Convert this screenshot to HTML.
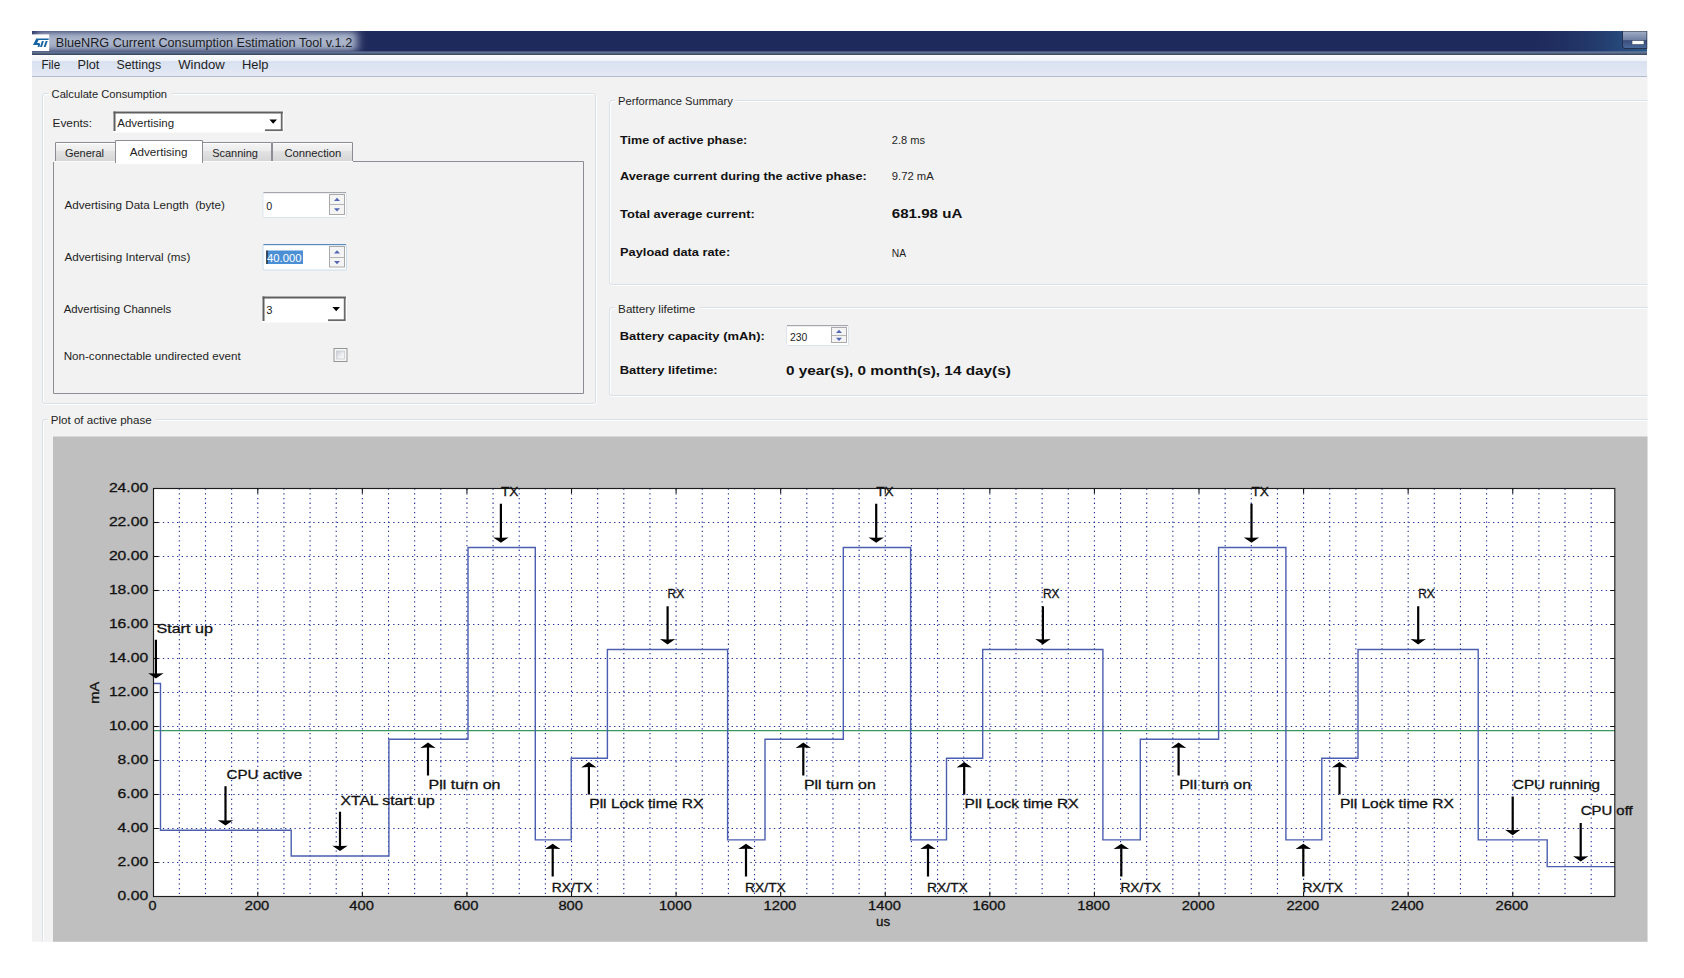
<!DOCTYPE html><html><head><meta charset="utf-8"><title>BlueNRG Current Consumption Estimation Tool</title>
<style>html,body{margin:0;padding:0;background:#fff;width:1684px;height:978px;overflow:hidden}svg{display:block;font-family:"Liberation Sans",sans-serif}</style></head><body>
<svg width="1684" height="978" viewBox="0 0 1684 978">
<defs><linearGradient id="tglow" x1="0" y1="0" x2="1" y2="0"><stop offset="0" stop-color="#8d9bb9"/><stop offset="0.85" stop-color="#95a2bf"/><stop offset="1" stop-color="#1f2a5c"/></linearGradient><linearGradient id="tglowv" x1="0" y1="0" x2="0" y2="1"><stop offset="0" stop-color="#1f2a5c" stop-opacity="0.55"/><stop offset="0.35" stop-color="#1f2a5c" stop-opacity="0"/><stop offset="0.7" stop-color="#1f2a5c" stop-opacity="0"/><stop offset="1" stop-color="#1f2a5c" stop-opacity="0.5"/></linearGradient><linearGradient id="menug" x1="0" y1="0" x2="0" y2="1"><stop offset="0" stop-color="#fbfcfe"/><stop offset="0.25" stop-color="#f0f3f9"/><stop offset="0.3" stop-color="#d9e1f0"/><stop offset="1" stop-color="#e4e9f4"/></linearGradient><linearGradient id="tabg" x1="0" y1="0" x2="0" y2="1"><stop offset="0" stop-color="#f6f6f6"/><stop offset="0.45" stop-color="#ececec"/><stop offset="0.5" stop-color="#e2e2e2"/><stop offset="1" stop-color="#d6d6d6"/></linearGradient><linearGradient id="btng" x1="0" y1="0" x2="0" y2="1"><stop offset="0" stop-color="#a3b0c8"/><stop offset="0.5" stop-color="#6f80a3"/><stop offset="0.55" stop-color="#3b4f7c"/><stop offset="1" stop-color="#4a6a9c"/></linearGradient><linearGradient id="tright" x1="0" y1="0" x2="1" y2="0"><stop offset="0" stop-color="#1f2a5c" stop-opacity="0"/><stop offset="1" stop-color="#2b5a8c"/></linearGradient><filter id="blur3" x="-20%" y="-60%" width="140%" height="220%"><feGaussianBlur stdDeviation="5 3"/></filter><linearGradient id="tstrip" x1="0" y1="0" x2="0" y2="1"><stop offset="0" stop-color="#7386a8"/><stop offset="1" stop-color="#36425a"/></linearGradient><linearGradient id="cbg" x1="0" y1="0" x2="1" y2="1"><stop offset="0" stop-color="#c3c8d4"/><stop offset="0.6" stop-color="#eef0f2"/><stop offset="1" stop-color="#f7f8f8"/></linearGradient><clipPath id="tbclip"><rect x="32" y="31" width="1615" height="20.5"/></clipPath><clipPath id="win"><rect x="32" y="31" width="1615.5" height="910.8"/></clipPath><clipPath id="axclip"><rect x="153" y="488" width="1462" height="409"/></clipPath></defs>
<g clip-path="url(#win)">
<rect x="32" y="31" width="1615" height="24" fill="#1f2a5c"/>
<path d="M1540 31 L1647 31 L1647 52 L1520 52 Z" fill="url(#tright)"/>
<g clip-path="url(#tbclip)"><rect x="35" y="31.6" width="322" height="19" fill="#a9b4ca" filter="url(#blur3)"/></g>
<rect x="32" y="51.5" width="1615" height="3.5" fill="url(#tstrip)"/>
<rect x="32" y="34.4" width="17.2" height="16.6" fill="#ffffff"/>
<path d="M36.2 38.5 L48.9 38.5 L48.5 39.9 L38.6 39.9 L37.1 43.0 L38.9 43.0 Q40.4 43.1 40.1 44.4 L39.4 46.9 L37.6 46.9 L38.1 45.3 Q38.2 44.9 37.7 44.9 L33.0 44.9 Z M41.9 41.0 L43.9 41.0 L42.0 46.9 L40.0 46.9 Z M45.7 41.0 L47.7 41.0 L45.6 46.9 L43.6 46.9 Z" fill="#1764a3"/>
<text x="55.7" y="47.1" font-size="12.5" fill="#1b1b22" text-anchor="start" textLength="296.5" lengthAdjust="spacingAndGlyphs">BlueNRG Current Consumption Estimation Tool v.1.2</text>
<path d="M1622.5 31 L1647 31 L1647 48.5 L1625 48.5 Q1622.5 48.5 1622.5 46 Z" fill="url(#btng)" stroke="#27314d" stroke-width="1"/>
<rect x="1632" y="40.5" width="12" height="4" fill="#ffffff" stroke="#38435f" stroke-width="0.6"/>
<rect x="32" y="55" width="1615" height="22" fill="url(#menug)"/>
<rect x="32" y="76" width="1615" height="1" fill="#b3bccc"/>
<text x="41.4" y="69.1" font-size="12" fill="#1e1e1e" text-anchor="start" textLength="18.8" lengthAdjust="spacingAndGlyphs">File</text>
<text x="77.5" y="69.1" font-size="12" fill="#1e1e1e" text-anchor="start" textLength="21.9" lengthAdjust="spacingAndGlyphs">Plot</text>
<text x="116.5" y="69.1" font-size="12" fill="#1e1e1e" text-anchor="start" textLength="44.6" lengthAdjust="spacingAndGlyphs">Settings</text>
<text x="178.2" y="69.1" font-size="12" fill="#1e1e1e" text-anchor="start" textLength="46.6" lengthAdjust="spacingAndGlyphs">Window</text>
<text x="242.0" y="69.1" font-size="12" fill="#1e1e1e" text-anchor="start" textLength="26.5" lengthAdjust="spacingAndGlyphs">Help</text>
<rect x="32" y="77" width="1616" height="866" fill="#f2f2f2"/>
<path d="M49.6 94.5 L46.0 94.5 Q43.5 94.5 43.5 97.0 L43.5 402.0 Q43.5 404.5 46.0 404.5 L594.0 404.5 Q596.5 404.5 596.5 402.0 L596.5 97.0 Q596.5 94.5 594.0 94.5 L173.0 94.5" fill="none" stroke="#ffffff" stroke-width="1"/>
<path d="M48.6 93.5 L45.0 93.5 Q42.5 93.5 42.5 96.0 L42.5 401.0 Q42.5 403.5 45.0 403.5 L593.0 403.5 Q595.5 403.5 595.5 401.0 L595.5 96.0 Q595.5 93.5 593.0 93.5 L172.0 93.5" fill="none" stroke="#d9e1e7" stroke-width="1"/>
<text x="51.6" y="97.8" font-size="11" fill="#1e1e1e" text-anchor="start" textLength="115.5" lengthAdjust="spacingAndGlyphs">Calculate Consumption</text>
<text x="52.5" y="127.2" font-size="11" fill="#1e1e1e" text-anchor="start" textLength="39.5" lengthAdjust="spacingAndGlyphs">Events:</text>
<rect x="113" y="111" width="171" height="21.5" fill="#ffffff"/>
<rect x="113.5" y="111.5" width="169.5" height="2" fill="#5e5e5e"/>
<rect x="113.5" y="111.5" width="2" height="19.5" fill="#5e5e5e"/>
<rect x="280.8" y="112" width="1.8" height="18.5" fill="#6a6a6a"/>
<rect x="265" y="129.3" width="17.6" height="1.8" fill="#6a6a6a"/>
<path d="M269.4 119.55 L277.0 119.55 L273.2 123.65 Z" fill="#000"/>
<text x="117.3" y="126.6" font-size="11" fill="#1e1e1e" text-anchor="start" textLength="56.8" lengthAdjust="spacingAndGlyphs">Advertising</text>
<path d="M353 161.5 L583.5 161.5 L583.5 393.5 L53.5 393.5 L53.5 162" fill="none" stroke="#8c8e94" stroke-width="1"/>
<rect x="54" y="161" width="299" height="1.2" fill="#fbfbfb"/>
<rect x="55" y="142" width="61" height="19" fill="url(#tabg)"/>
<path d="M55.5 161 L55.5 142.5 L115.5 142.5 L115.5 161" fill="none" stroke="#8c8e94" stroke-width="1"/>
<rect x="56" y="143" width="59" height="1" fill="#ffffff" opacity="0.8"/>
<text x="64.9" y="156.8" font-size="11" fill="#1e1e1e" text-anchor="start" textLength="39.1" lengthAdjust="spacingAndGlyphs">General</text>
<rect x="202" y="142" width="70" height="19" fill="url(#tabg)"/>
<path d="M202.5 161 L202.5 142.5 L271.5 142.5 L271.5 161" fill="none" stroke="#8c8e94" stroke-width="1"/>
<rect x="203" y="143" width="68" height="1" fill="#ffffff" opacity="0.8"/>
<text x="212.2" y="156.8" font-size="11" fill="#1e1e1e" text-anchor="start" textLength="45.8" lengthAdjust="spacingAndGlyphs">Scanning</text>
<rect x="272" y="142" width="81" height="19" fill="url(#tabg)"/>
<path d="M272.5 161 L272.5 142.5 L352.5 142.5 L352.5 161" fill="none" stroke="#8c8e94" stroke-width="1"/>
<rect x="273" y="143" width="79" height="1" fill="#ffffff" opacity="0.8"/>
<text x="284.4" y="156.8" font-size="11" fill="#1e1e1e" text-anchor="start" textLength="56.9" lengthAdjust="spacingAndGlyphs">Connection</text>
<path d="M115.5 163 L115.5 140.5 L202.5 140.5 L202.5 163" fill="#ffffff" stroke="#8c8e94" stroke-width="1"/>
<rect x="116" y="141" width="86" height="23" fill="#ffffff"/>
<text x="129.7" y="155.6" font-size="11" fill="#1e1e1e" text-anchor="start" textLength="57.7" lengthAdjust="spacingAndGlyphs">Advertising</text>
<text x="64.4" y="209.3" font-size="11" fill="#1e1e1e" text-anchor="start" textLength="160.5" lengthAdjust="spacingAndGlyphs">Advertising Data Length&#160;&#160;(byte)</text>
<text x="64.4" y="261.3" font-size="11" fill="#1e1e1e" text-anchor="start" textLength="125.9" lengthAdjust="spacingAndGlyphs">Advertising Interval (ms)</text>
<text x="63.7" y="313.2" font-size="11" fill="#1e1e1e" text-anchor="start" textLength="107.6" lengthAdjust="spacingAndGlyphs">Advertising Channels</text>
<text x="63.7" y="359.6" font-size="11" fill="#1e1e1e" text-anchor="start" textLength="177.0" lengthAdjust="spacingAndGlyphs">Non-connectable undirected event</text>
<rect x="263.0" y="192.5" width="83.5" height="25" rx="1" fill="#ffffff" stroke="#dfe4ec" stroke-width="1"/>
<rect x="263.5" y="192" width="82.5" height="1.2" fill="#a3a7ad"/>
<rect x="329.5" y="194.5" width="15" height="20" fill="#f4f4f4" stroke="#a9a9a9" stroke-width="1"/>
<rect x="330" y="204" width="14" height="1" fill="#b4b4b4"/>
<path d="M334.0 200.9 L340.0 200.9 L337.0 197.70000000000002 Z" fill="#5566b2"/>
<path d="M334.0 208.20000000000002 L340.0 208.20000000000002 L337.0 211.4 Z" fill="#5566b2"/>
<text x="266.3" y="209.6" font-size="11" fill="#1e1e1e" text-anchor="start" textLength="6.0" lengthAdjust="spacingAndGlyphs">0</text>
<rect x="263.0" y="244.5" width="83.5" height="25.5" rx="1" fill="#ffffff" stroke="#c8dcf0" stroke-width="1"/>
<rect x="263.5" y="244" width="82.5" height="1.2" fill="#5a8abb"/>
<rect x="329.5" y="246.5" width="15" height="20.5" fill="#f4f4f4" stroke="#a9a9a9" stroke-width="1"/>
<rect x="330" y="257" width="14" height="1" fill="#b4b4b4"/>
<path d="M334.0 253.4 L340.0 253.4 L337.0 250.20000000000002 Z" fill="#5566b2"/>
<path d="M334.0 260.95 L340.0 260.95 L337.0 264.15000000000003 Z" fill="#5566b2"/>
<rect x="266.5" y="250.5" width="36.5" height="13.5" fill="#4a8fd6"/>
<rect x="266.3" y="250.5" width="1.3" height="13.5" fill="#1a1a1a"/>
<text x="267.0" y="261.5" font-size="11" fill="#ffffff" text-anchor="start" textLength="34.5" lengthAdjust="spacingAndGlyphs">40.000</text>
<rect x="262" y="296" width="85" height="26.5" fill="#ffffff"/>
<rect x="262.5" y="296.5" width="83.5" height="2" fill="#5e5e5e"/>
<rect x="262.5" y="296.5" width="2" height="24.5" fill="#5e5e5e"/>
<rect x="343.8" y="297" width="1.8" height="23.5" fill="#6a6a6a"/>
<rect x="328" y="319.3" width="17.6" height="1.8" fill="#6a6a6a"/>
<path d="M332.4 307.05 L340.0 307.05 L336.2 311.15 Z" fill="#000"/>
<text x="266.3" y="313.8" font-size="11" fill="#1e1e1e" text-anchor="start" textLength="6.2" lengthAdjust="spacingAndGlyphs">3</text>
<rect x="334" y="348.5" width="13" height="13" fill="#f6f6f6" stroke="#959595" stroke-width="1"/>
<rect x="336.5" y="351" width="8" height="8" fill="url(#cbg)" stroke="#c9ccd3" stroke-width="0.8"/>
<path d="M616.0 101.5 L613.0 101.5 Q610.5 101.5 610.5 104.0 L610.5 283.0 Q610.5 285.5 613.0 285.5 L1699.0 285.5 Q1701.5 285.5 1701.5 283.0 L1701.5 104.0 Q1701.5 101.5 1699.0 101.5 L736.5 101.5" fill="none" stroke="#ffffff" stroke-width="1"/>
<path d="M615.0 100.5 L612.0 100.5 Q609.5 100.5 609.5 103.0 L609.5 282.0 Q609.5 284.5 612.0 284.5 L1698.0 284.5 Q1700.5 284.5 1700.5 282.0 L1700.5 103.0 Q1700.5 100.5 1698.0 100.5 L735.5 100.5" fill="none" stroke="#d9e1e7" stroke-width="1"/>
<text x="618.0" y="105.4" font-size="11" fill="#1e1e1e" text-anchor="start" textLength="114.9" lengthAdjust="spacingAndGlyphs">Performance Summary</text>
<text x="620.1" y="143.7" font-size="11.2" font-weight="bold" fill="#111" text-anchor="start" textLength="127.2" lengthAdjust="spacingAndGlyphs">Time of active phase:</text>
<text x="891.8" y="144.0" font-size="11" fill="#1e1e1e" text-anchor="start" textLength="33.2" lengthAdjust="spacingAndGlyphs">2.8 ms</text>
<text x="620.1" y="180.2" font-size="11.2" font-weight="bold" fill="#111" text-anchor="start" textLength="246.6" lengthAdjust="spacingAndGlyphs">Average current during the active phase:</text>
<text x="891.8" y="180.2" font-size="11" fill="#1e1e1e" text-anchor="start" textLength="41.9" lengthAdjust="spacingAndGlyphs">9.72 mA</text>
<text x="620.1" y="218.2" font-size="11.2" font-weight="bold" fill="#111" text-anchor="start" textLength="134.7" lengthAdjust="spacingAndGlyphs">Total average current:</text>
<text x="891.8" y="218.4" font-size="13.4" font-weight="bold" fill="#111" text-anchor="start" textLength="70.5" lengthAdjust="spacingAndGlyphs">681.98 uA</text>
<text x="620.1" y="256.3" font-size="11.2" font-weight="bold" fill="#111" text-anchor="start" textLength="110.1" lengthAdjust="spacingAndGlyphs">Payload data rate:</text>
<text x="891.8" y="256.7" font-size="11" fill="#1e1e1e" text-anchor="start" textLength="14.3" lengthAdjust="spacingAndGlyphs">NA</text>
<path d="M616.0 308.5 L613.0 308.5 Q610.5 308.5 610.5 311.0 L610.5 394.0 Q610.5 396.5 613.0 396.5 L1699.0 396.5 Q1701.5 396.5 1701.5 394.0 L1701.5 311.0 Q1701.5 308.5 1699.0 308.5 L701.0 308.5" fill="none" stroke="#ffffff" stroke-width="1"/>
<path d="M615.0 307.5 L612.0 307.5 Q609.5 307.5 609.5 310.0 L609.5 393.0 Q609.5 395.5 612.0 395.5 L1698.0 395.5 Q1700.5 395.5 1700.5 393.0 L1700.5 310.0 Q1700.5 307.5 1698.0 307.5 L700.0 307.5" fill="none" stroke="#d9e1e7" stroke-width="1"/>
<text x="618.1" y="312.5" font-size="11" fill="#1e1e1e" text-anchor="start" textLength="77.2" lengthAdjust="spacingAndGlyphs">Battery lifetime</text>
<text x="619.7" y="340.3" font-size="11.2" font-weight="bold" fill="#111" text-anchor="start" textLength="145.1" lengthAdjust="spacingAndGlyphs">Battery capacity (mAh):</text>
<rect x="786.5" y="325.5" width="62" height="20" rx="1" fill="#ffffff" stroke="#dfe4ec" stroke-width="1"/>
<rect x="787" y="325" width="61" height="1.2" fill="#a3a7ad"/>
<rect x="831.5" y="327.5" width="15" height="15" fill="#f4f4f4" stroke="#a9a9a9" stroke-width="1"/>
<rect x="832" y="335" width="14" height="1" fill="#b4b4b4"/>
<path d="M836.0 332.90000000000003 L842.0 332.90000000000003 L839.0 329.7 Z" fill="#5566b2"/>
<path d="M836.0 337.7 L842.0 337.7 L839.0 340.90000000000003 Z" fill="#5566b2"/>
<text x="790.0" y="340.7" font-size="11" fill="#1e1e1e" text-anchor="start" textLength="17.3" lengthAdjust="spacingAndGlyphs">230</text>
<text x="619.7" y="373.5" font-size="11.2" font-weight="bold" fill="#111" text-anchor="start" textLength="98.0" lengthAdjust="spacingAndGlyphs">Battery lifetime:</text>
<text x="786.0" y="374.6" font-size="13.4" font-weight="bold" fill="#111" text-anchor="start" textLength="224.8" lengthAdjust="spacingAndGlyphs">0 year(s), 0 month(s), 14 day(s)</text>
<path d="M48.8 420.5 L46.0 420.5 Q43.5 420.5 43.5 423.0 L43.5 999.0 Q43.5 1001.5 46.0 1001.5 L1699.0 1001.5 Q1701.5 1001.5 1701.5 999.0 L1701.5 423.0 Q1701.5 420.5 1699.0 420.5 L157.0 420.5" fill="none" stroke="#ffffff" stroke-width="1"/>
<path d="M47.8 419.5 L45.0 419.5 Q42.5 419.5 42.5 422.0 L42.5 998.0 Q42.5 1000.5 45.0 1000.5 L1698.0 1000.5 Q1700.5 1000.5 1700.5 998.0 L1700.5 422.0 Q1700.5 419.5 1698.0 419.5 L156.0 419.5" fill="none" stroke="#d9e1e7" stroke-width="1"/>
<text x="50.8" y="423.7" font-size="11" fill="#1e1e1e" text-anchor="start" textLength="100.9" lengthAdjust="spacingAndGlyphs">Plot of active phase</text>
<rect x="53" y="436.5" width="1596" height="507" fill="#bfbfbf"/>
<rect x="153.5" y="488.5" width="1461.5" height="408.0" fill="#ffffff"/>
<line x1="179.34" y1="488.5" x2="179.34" y2="896.5" stroke="#1c2c96" stroke-width="1.1" stroke-dasharray="1.3 3.4"/>
<line x1="205.49" y1="488.5" x2="205.49" y2="896.5" stroke="#1c2c96" stroke-width="1.1" stroke-dasharray="1.3 3.4"/>
<line x1="231.63" y1="488.5" x2="231.63" y2="896.5" stroke="#1c2c96" stroke-width="1.1" stroke-dasharray="1.3 3.4"/>
<line x1="257.78" y1="488.5" x2="257.78" y2="896.5" stroke="#1c2c96" stroke-width="1.1" stroke-dasharray="1.3 3.4"/>
<line x1="283.92" y1="488.5" x2="283.92" y2="896.5" stroke="#1c2c96" stroke-width="1.1" stroke-dasharray="1.3 3.4"/>
<line x1="310.07" y1="488.5" x2="310.07" y2="896.5" stroke="#1c2c96" stroke-width="1.1" stroke-dasharray="1.3 3.4"/>
<line x1="336.22" y1="488.5" x2="336.22" y2="896.5" stroke="#1c2c96" stroke-width="1.1" stroke-dasharray="1.3 3.4"/>
<line x1="362.36" y1="488.5" x2="362.36" y2="896.5" stroke="#1c2c96" stroke-width="1.1" stroke-dasharray="1.3 3.4"/>
<line x1="388.50" y1="488.5" x2="388.50" y2="896.5" stroke="#1c2c96" stroke-width="1.1" stroke-dasharray="1.3 3.4"/>
<line x1="414.65" y1="488.5" x2="414.65" y2="896.5" stroke="#1c2c96" stroke-width="1.1" stroke-dasharray="1.3 3.4"/>
<line x1="440.80" y1="488.5" x2="440.80" y2="896.5" stroke="#1c2c96" stroke-width="1.1" stroke-dasharray="1.3 3.4"/>
<line x1="466.94" y1="488.5" x2="466.94" y2="896.5" stroke="#1c2c96" stroke-width="1.1" stroke-dasharray="1.3 3.4"/>
<line x1="493.09" y1="488.5" x2="493.09" y2="896.5" stroke="#1c2c96" stroke-width="1.1" stroke-dasharray="1.3 3.4"/>
<line x1="519.23" y1="488.5" x2="519.23" y2="896.5" stroke="#1c2c96" stroke-width="1.1" stroke-dasharray="1.3 3.4"/>
<line x1="545.38" y1="488.5" x2="545.38" y2="896.5" stroke="#1c2c96" stroke-width="1.1" stroke-dasharray="1.3 3.4"/>
<line x1="571.52" y1="488.5" x2="571.52" y2="896.5" stroke="#1c2c96" stroke-width="1.1" stroke-dasharray="1.3 3.4"/>
<line x1="597.66" y1="488.5" x2="597.66" y2="896.5" stroke="#1c2c96" stroke-width="1.1" stroke-dasharray="1.3 3.4"/>
<line x1="623.81" y1="488.5" x2="623.81" y2="896.5" stroke="#1c2c96" stroke-width="1.1" stroke-dasharray="1.3 3.4"/>
<line x1="649.96" y1="488.5" x2="649.96" y2="896.5" stroke="#1c2c96" stroke-width="1.1" stroke-dasharray="1.3 3.4"/>
<line x1="676.10" y1="488.5" x2="676.10" y2="896.5" stroke="#1c2c96" stroke-width="1.1" stroke-dasharray="1.3 3.4"/>
<line x1="702.25" y1="488.5" x2="702.25" y2="896.5" stroke="#1c2c96" stroke-width="1.1" stroke-dasharray="1.3 3.4"/>
<line x1="728.39" y1="488.5" x2="728.39" y2="896.5" stroke="#1c2c96" stroke-width="1.1" stroke-dasharray="1.3 3.4"/>
<line x1="754.54" y1="488.5" x2="754.54" y2="896.5" stroke="#1c2c96" stroke-width="1.1" stroke-dasharray="1.3 3.4"/>
<line x1="780.68" y1="488.5" x2="780.68" y2="896.5" stroke="#1c2c96" stroke-width="1.1" stroke-dasharray="1.3 3.4"/>
<line x1="806.83" y1="488.5" x2="806.83" y2="896.5" stroke="#1c2c96" stroke-width="1.1" stroke-dasharray="1.3 3.4"/>
<line x1="832.97" y1="488.5" x2="832.97" y2="896.5" stroke="#1c2c96" stroke-width="1.1" stroke-dasharray="1.3 3.4"/>
<line x1="859.12" y1="488.5" x2="859.12" y2="896.5" stroke="#1c2c96" stroke-width="1.1" stroke-dasharray="1.3 3.4"/>
<line x1="885.26" y1="488.5" x2="885.26" y2="896.5" stroke="#1c2c96" stroke-width="1.1" stroke-dasharray="1.3 3.4"/>
<line x1="911.40" y1="488.5" x2="911.40" y2="896.5" stroke="#1c2c96" stroke-width="1.1" stroke-dasharray="1.3 3.4"/>
<line x1="937.55" y1="488.5" x2="937.55" y2="896.5" stroke="#1c2c96" stroke-width="1.1" stroke-dasharray="1.3 3.4"/>
<line x1="963.69" y1="488.5" x2="963.69" y2="896.5" stroke="#1c2c96" stroke-width="1.1" stroke-dasharray="1.3 3.4"/>
<line x1="989.84" y1="488.5" x2="989.84" y2="896.5" stroke="#1c2c96" stroke-width="1.1" stroke-dasharray="1.3 3.4"/>
<line x1="1015.99" y1="488.5" x2="1015.99" y2="896.5" stroke="#1c2c96" stroke-width="1.1" stroke-dasharray="1.3 3.4"/>
<line x1="1042.13" y1="488.5" x2="1042.13" y2="896.5" stroke="#1c2c96" stroke-width="1.1" stroke-dasharray="1.3 3.4"/>
<line x1="1068.28" y1="488.5" x2="1068.28" y2="896.5" stroke="#1c2c96" stroke-width="1.1" stroke-dasharray="1.3 3.4"/>
<line x1="1094.42" y1="488.5" x2="1094.42" y2="896.5" stroke="#1c2c96" stroke-width="1.1" stroke-dasharray="1.3 3.4"/>
<line x1="1120.57" y1="488.5" x2="1120.57" y2="896.5" stroke="#1c2c96" stroke-width="1.1" stroke-dasharray="1.3 3.4"/>
<line x1="1146.71" y1="488.5" x2="1146.71" y2="896.5" stroke="#1c2c96" stroke-width="1.1" stroke-dasharray="1.3 3.4"/>
<line x1="1172.86" y1="488.5" x2="1172.86" y2="896.5" stroke="#1c2c96" stroke-width="1.1" stroke-dasharray="1.3 3.4"/>
<line x1="1199.00" y1="488.5" x2="1199.00" y2="896.5" stroke="#1c2c96" stroke-width="1.1" stroke-dasharray="1.3 3.4"/>
<line x1="1225.15" y1="488.5" x2="1225.15" y2="896.5" stroke="#1c2c96" stroke-width="1.1" stroke-dasharray="1.3 3.4"/>
<line x1="1251.29" y1="488.5" x2="1251.29" y2="896.5" stroke="#1c2c96" stroke-width="1.1" stroke-dasharray="1.3 3.4"/>
<line x1="1277.44" y1="488.5" x2="1277.44" y2="896.5" stroke="#1c2c96" stroke-width="1.1" stroke-dasharray="1.3 3.4"/>
<line x1="1303.58" y1="488.5" x2="1303.58" y2="896.5" stroke="#1c2c96" stroke-width="1.1" stroke-dasharray="1.3 3.4"/>
<line x1="1329.73" y1="488.5" x2="1329.73" y2="896.5" stroke="#1c2c96" stroke-width="1.1" stroke-dasharray="1.3 3.4"/>
<line x1="1355.87" y1="488.5" x2="1355.87" y2="896.5" stroke="#1c2c96" stroke-width="1.1" stroke-dasharray="1.3 3.4"/>
<line x1="1382.02" y1="488.5" x2="1382.02" y2="896.5" stroke="#1c2c96" stroke-width="1.1" stroke-dasharray="1.3 3.4"/>
<line x1="1408.16" y1="488.5" x2="1408.16" y2="896.5" stroke="#1c2c96" stroke-width="1.1" stroke-dasharray="1.3 3.4"/>
<line x1="1434.31" y1="488.5" x2="1434.31" y2="896.5" stroke="#1c2c96" stroke-width="1.1" stroke-dasharray="1.3 3.4"/>
<line x1="1460.45" y1="488.5" x2="1460.45" y2="896.5" stroke="#1c2c96" stroke-width="1.1" stroke-dasharray="1.3 3.4"/>
<line x1="1486.60" y1="488.5" x2="1486.60" y2="896.5" stroke="#1c2c96" stroke-width="1.1" stroke-dasharray="1.3 3.4"/>
<line x1="1512.74" y1="488.5" x2="1512.74" y2="896.5" stroke="#1c2c96" stroke-width="1.1" stroke-dasharray="1.3 3.4"/>
<line x1="1538.89" y1="488.5" x2="1538.89" y2="896.5" stroke="#1c2c96" stroke-width="1.1" stroke-dasharray="1.3 3.4"/>
<line x1="1565.03" y1="488.5" x2="1565.03" y2="896.5" stroke="#1c2c96" stroke-width="1.1" stroke-dasharray="1.3 3.4"/>
<line x1="1591.18" y1="488.5" x2="1591.18" y2="896.5" stroke="#1c2c96" stroke-width="1.1" stroke-dasharray="1.3 3.4"/>
<line x1="153.5" y1="862.50" x2="1615.0" y2="862.50" stroke="#1c2c96" stroke-width="1.1" stroke-dasharray="1.3 3.4"/>
<line x1="153.5" y1="828.50" x2="1615.0" y2="828.50" stroke="#1c2c96" stroke-width="1.1" stroke-dasharray="1.3 3.4"/>
<line x1="153.5" y1="794.50" x2="1615.0" y2="794.50" stroke="#1c2c96" stroke-width="1.1" stroke-dasharray="1.3 3.4"/>
<line x1="153.5" y1="760.50" x2="1615.0" y2="760.50" stroke="#1c2c96" stroke-width="1.1" stroke-dasharray="1.3 3.4"/>
<line x1="153.5" y1="726.50" x2="1615.0" y2="726.50" stroke="#1c2c96" stroke-width="1.1" stroke-dasharray="1.3 3.4"/>
<line x1="153.5" y1="692.50" x2="1615.0" y2="692.50" stroke="#1c2c96" stroke-width="1.1" stroke-dasharray="1.3 3.4"/>
<line x1="153.5" y1="658.50" x2="1615.0" y2="658.50" stroke="#1c2c96" stroke-width="1.1" stroke-dasharray="1.3 3.4"/>
<line x1="153.5" y1="624.50" x2="1615.0" y2="624.50" stroke="#1c2c96" stroke-width="1.1" stroke-dasharray="1.3 3.4"/>
<line x1="153.5" y1="590.50" x2="1615.0" y2="590.50" stroke="#1c2c96" stroke-width="1.1" stroke-dasharray="1.3 3.4"/>
<line x1="153.5" y1="556.50" x2="1615.0" y2="556.50" stroke="#1c2c96" stroke-width="1.1" stroke-dasharray="1.3 3.4"/>
<line x1="153.5" y1="522.50" x2="1615.0" y2="522.50" stroke="#1c2c96" stroke-width="1.1" stroke-dasharray="1.3 3.4"/>
<line x1="153.5" y1="730.6" x2="1615.0" y2="730.6" stroke="#39995c" stroke-width="1.25"/>
<g clip-path="url(#axclip)"><path d="M153.20 683.50 L160.50 683.50 L160.50 830.21 L291.20 830.21 L291.20 856.05 L388.90 856.05 L388.90 739.26 L468.00 739.26 L468.00 547.50 L535.30 547.50 L535.30 839.90 L571.20 839.90 L571.20 758.30 L607.40 758.30 L607.40 649.50 L727.60 649.50 L727.60 839.90 L765.00 839.90 L765.00 739.26 L843.30 739.26 L843.30 547.50 L910.60 547.50 L910.60 839.90 L946.50 839.90 L946.50 758.30 L982.70 758.30 L982.70 649.50 L1102.90 649.50 L1102.90 839.90 L1140.30 839.90 L1140.30 739.26 L1218.60 739.26 L1218.60 547.50 L1285.90 547.50 L1285.90 839.90 L1321.80 839.90 L1321.80 758.30 L1358.00 758.30 L1358.00 649.50 L1478.20 649.50 L1478.20 839.90 L1547.20 839.90 L1547.20 866.59 L1616.00 866.59" fill="none" stroke="#4b5eb0" stroke-width="1.4" stroke-linejoin="miter"/></g>
<rect x="153.5" y="488.5" width="1461.3" height="408" fill="none" stroke="#1c1c1c" stroke-width="1.15"/>
<line x1="257.78" y1="896.5" x2="257.78" y2="891.7" stroke="#141414" stroke-width="1.1"/>
<line x1="257.78" y1="488.5" x2="257.78" y2="493.3" stroke="#141414" stroke-width="1.1"/>
<line x1="362.36" y1="896.5" x2="362.36" y2="891.7" stroke="#141414" stroke-width="1.1"/>
<line x1="362.36" y1="488.5" x2="362.36" y2="493.3" stroke="#141414" stroke-width="1.1"/>
<line x1="466.94" y1="896.5" x2="466.94" y2="891.7" stroke="#141414" stroke-width="1.1"/>
<line x1="466.94" y1="488.5" x2="466.94" y2="493.3" stroke="#141414" stroke-width="1.1"/>
<line x1="571.52" y1="896.5" x2="571.52" y2="891.7" stroke="#141414" stroke-width="1.1"/>
<line x1="571.52" y1="488.5" x2="571.52" y2="493.3" stroke="#141414" stroke-width="1.1"/>
<line x1="676.10" y1="896.5" x2="676.10" y2="891.7" stroke="#141414" stroke-width="1.1"/>
<line x1="676.10" y1="488.5" x2="676.10" y2="493.3" stroke="#141414" stroke-width="1.1"/>
<line x1="780.68" y1="896.5" x2="780.68" y2="891.7" stroke="#141414" stroke-width="1.1"/>
<line x1="780.68" y1="488.5" x2="780.68" y2="493.3" stroke="#141414" stroke-width="1.1"/>
<line x1="885.26" y1="896.5" x2="885.26" y2="891.7" stroke="#141414" stroke-width="1.1"/>
<line x1="885.26" y1="488.5" x2="885.26" y2="493.3" stroke="#141414" stroke-width="1.1"/>
<line x1="989.84" y1="896.5" x2="989.84" y2="891.7" stroke="#141414" stroke-width="1.1"/>
<line x1="989.84" y1="488.5" x2="989.84" y2="493.3" stroke="#141414" stroke-width="1.1"/>
<line x1="1094.42" y1="896.5" x2="1094.42" y2="891.7" stroke="#141414" stroke-width="1.1"/>
<line x1="1094.42" y1="488.5" x2="1094.42" y2="493.3" stroke="#141414" stroke-width="1.1"/>
<line x1="1199.00" y1="896.5" x2="1199.00" y2="891.7" stroke="#141414" stroke-width="1.1"/>
<line x1="1199.00" y1="488.5" x2="1199.00" y2="493.3" stroke="#141414" stroke-width="1.1"/>
<line x1="1303.58" y1="896.5" x2="1303.58" y2="891.7" stroke="#141414" stroke-width="1.1"/>
<line x1="1303.58" y1="488.5" x2="1303.58" y2="493.3" stroke="#141414" stroke-width="1.1"/>
<line x1="1408.16" y1="896.5" x2="1408.16" y2="891.7" stroke="#141414" stroke-width="1.1"/>
<line x1="1408.16" y1="488.5" x2="1408.16" y2="493.3" stroke="#141414" stroke-width="1.1"/>
<line x1="1512.74" y1="896.5" x2="1512.74" y2="891.7" stroke="#141414" stroke-width="1.1"/>
<line x1="1512.74" y1="488.5" x2="1512.74" y2="493.3" stroke="#141414" stroke-width="1.1"/>
<line x1="153.5" y1="862.50" x2="158.3" y2="862.50" stroke="#141414" stroke-width="1.1"/>
<line x1="1615.0" y1="862.50" x2="1610.2" y2="862.50" stroke="#141414" stroke-width="1.1"/>
<line x1="153.5" y1="828.50" x2="158.3" y2="828.50" stroke="#141414" stroke-width="1.1"/>
<line x1="1615.0" y1="828.50" x2="1610.2" y2="828.50" stroke="#141414" stroke-width="1.1"/>
<line x1="153.5" y1="794.50" x2="158.3" y2="794.50" stroke="#141414" stroke-width="1.1"/>
<line x1="1615.0" y1="794.50" x2="1610.2" y2="794.50" stroke="#141414" stroke-width="1.1"/>
<line x1="153.5" y1="760.50" x2="158.3" y2="760.50" stroke="#141414" stroke-width="1.1"/>
<line x1="1615.0" y1="760.50" x2="1610.2" y2="760.50" stroke="#141414" stroke-width="1.1"/>
<line x1="153.5" y1="726.50" x2="158.3" y2="726.50" stroke="#141414" stroke-width="1.1"/>
<line x1="1615.0" y1="726.50" x2="1610.2" y2="726.50" stroke="#141414" stroke-width="1.1"/>
<line x1="153.5" y1="692.50" x2="158.3" y2="692.50" stroke="#141414" stroke-width="1.1"/>
<line x1="1615.0" y1="692.50" x2="1610.2" y2="692.50" stroke="#141414" stroke-width="1.1"/>
<line x1="153.5" y1="658.50" x2="158.3" y2="658.50" stroke="#141414" stroke-width="1.1"/>
<line x1="1615.0" y1="658.50" x2="1610.2" y2="658.50" stroke="#141414" stroke-width="1.1"/>
<line x1="153.5" y1="624.50" x2="158.3" y2="624.50" stroke="#141414" stroke-width="1.1"/>
<line x1="1615.0" y1="624.50" x2="1610.2" y2="624.50" stroke="#141414" stroke-width="1.1"/>
<line x1="153.5" y1="590.50" x2="158.3" y2="590.50" stroke="#141414" stroke-width="1.1"/>
<line x1="1615.0" y1="590.50" x2="1610.2" y2="590.50" stroke="#141414" stroke-width="1.1"/>
<line x1="153.5" y1="556.50" x2="158.3" y2="556.50" stroke="#141414" stroke-width="1.1"/>
<line x1="1615.0" y1="556.50" x2="1610.2" y2="556.50" stroke="#141414" stroke-width="1.1"/>
<line x1="153.5" y1="522.50" x2="158.3" y2="522.50" stroke="#141414" stroke-width="1.1"/>
<line x1="1615.0" y1="522.50" x2="1610.2" y2="522.50" stroke="#141414" stroke-width="1.1"/>
<text x="117.6" y="900.0" font-size="13.3" fill="#111111" text-anchor="start" textLength="30.6" lengthAdjust="spacingAndGlyphs" stroke="#111" stroke-width="0.3">0.00</text>
<text x="117.6" y="866.0" font-size="13.3" fill="#111111" text-anchor="start" textLength="30.6" lengthAdjust="spacingAndGlyphs" stroke="#111" stroke-width="0.3">2.00</text>
<text x="117.6" y="832.0" font-size="13.3" fill="#111111" text-anchor="start" textLength="30.6" lengthAdjust="spacingAndGlyphs" stroke="#111" stroke-width="0.3">4.00</text>
<text x="117.6" y="798.0" font-size="13.3" fill="#111111" text-anchor="start" textLength="30.6" lengthAdjust="spacingAndGlyphs" stroke="#111" stroke-width="0.3">6.00</text>
<text x="117.6" y="764.0" font-size="13.3" fill="#111111" text-anchor="start" textLength="30.6" lengthAdjust="spacingAndGlyphs" stroke="#111" stroke-width="0.3">8.00</text>
<text x="108.9" y="730.0" font-size="13.3" fill="#111111" text-anchor="start" textLength="39.3" lengthAdjust="spacingAndGlyphs" stroke="#111" stroke-width="0.3">10.00</text>
<text x="108.9" y="696.0" font-size="13.3" fill="#111111" text-anchor="start" textLength="39.3" lengthAdjust="spacingAndGlyphs" stroke="#111" stroke-width="0.3">12.00</text>
<text x="108.9" y="662.0" font-size="13.3" fill="#111111" text-anchor="start" textLength="39.3" lengthAdjust="spacingAndGlyphs" stroke="#111" stroke-width="0.3">14.00</text>
<text x="108.9" y="628.0" font-size="13.3" fill="#111111" text-anchor="start" textLength="39.3" lengthAdjust="spacingAndGlyphs" stroke="#111" stroke-width="0.3">16.00</text>
<text x="108.9" y="594.0" font-size="13.3" fill="#111111" text-anchor="start" textLength="39.3" lengthAdjust="spacingAndGlyphs" stroke="#111" stroke-width="0.3">18.00</text>
<text x="108.9" y="560.0" font-size="13.3" fill="#111111" text-anchor="start" textLength="39.3" lengthAdjust="spacingAndGlyphs" stroke="#111" stroke-width="0.3">20.00</text>
<text x="108.9" y="526.0" font-size="13.3" fill="#111111" text-anchor="start" textLength="39.3" lengthAdjust="spacingAndGlyphs" stroke="#111" stroke-width="0.3">22.00</text>
<text x="108.9" y="492.0" font-size="13.3" fill="#111111" text-anchor="start" textLength="39.3" lengthAdjust="spacingAndGlyphs" stroke="#111" stroke-width="0.3">24.00</text>
<text x="148.4" y="910.0" font-size="13.3" fill="#111111" text-anchor="start" textLength="8.0" lengthAdjust="spacingAndGlyphs" stroke="#111" stroke-width="0.3">0</text>
<text x="244.7" y="910.0" font-size="13.3" fill="#111111" text-anchor="start" textLength="24.6" lengthAdjust="spacingAndGlyphs" stroke="#111" stroke-width="0.3">200</text>
<text x="349.3" y="910.0" font-size="13.3" fill="#111111" text-anchor="start" textLength="24.6" lengthAdjust="spacingAndGlyphs" stroke="#111" stroke-width="0.3">400</text>
<text x="453.8" y="910.0" font-size="13.3" fill="#111111" text-anchor="start" textLength="24.6" lengthAdjust="spacingAndGlyphs" stroke="#111" stroke-width="0.3">600</text>
<text x="558.4" y="910.0" font-size="13.3" fill="#111111" text-anchor="start" textLength="24.6" lengthAdjust="spacingAndGlyphs" stroke="#111" stroke-width="0.3">800</text>
<text x="658.9" y="910.0" font-size="13.3" fill="#111111" text-anchor="start" textLength="32.8" lengthAdjust="spacingAndGlyphs" stroke="#111" stroke-width="0.3">1000</text>
<text x="763.5" y="910.0" font-size="13.3" fill="#111111" text-anchor="start" textLength="32.8" lengthAdjust="spacingAndGlyphs" stroke="#111" stroke-width="0.3">1200</text>
<text x="868.1" y="910.0" font-size="13.3" fill="#111111" text-anchor="start" textLength="32.8" lengthAdjust="spacingAndGlyphs" stroke="#111" stroke-width="0.3">1400</text>
<text x="972.6" y="910.0" font-size="13.3" fill="#111111" text-anchor="start" textLength="32.8" lengthAdjust="spacingAndGlyphs" stroke="#111" stroke-width="0.3">1600</text>
<text x="1077.2" y="910.0" font-size="13.3" fill="#111111" text-anchor="start" textLength="32.8" lengthAdjust="spacingAndGlyphs" stroke="#111" stroke-width="0.3">1800</text>
<text x="1181.8" y="910.0" font-size="13.3" fill="#111111" text-anchor="start" textLength="32.8" lengthAdjust="spacingAndGlyphs" stroke="#111" stroke-width="0.3">2000</text>
<text x="1286.4" y="910.0" font-size="13.3" fill="#111111" text-anchor="start" textLength="32.8" lengthAdjust="spacingAndGlyphs" stroke="#111" stroke-width="0.3">2200</text>
<text x="1391.0" y="910.0" font-size="13.3" fill="#111111" text-anchor="start" textLength="32.8" lengthAdjust="spacingAndGlyphs" stroke="#111" stroke-width="0.3">2400</text>
<text x="1495.5" y="910.0" font-size="13.3" fill="#111111" text-anchor="start" textLength="32.8" lengthAdjust="spacingAndGlyphs" stroke="#111" stroke-width="0.3">2600</text>
<text x="876.0" y="926.4" font-size="13.3" fill="#111111" text-anchor="start" textLength="14.1" lengthAdjust="spacingAndGlyphs" stroke="#111" stroke-width="0.3">us</text>
<text x="0" y="0" font-size="13.3" fill="#111111" textLength="22" lengthAdjust="spacingAndGlyphs" stroke="#111" stroke-width="0.3" transform="translate(99.4 703.8) rotate(-90)">mA</text>
<path d="M154.80 639.80 L157.00 639.80 L157.00 673.60 L163.60 673.20 L155.90 678.60 L148.20 673.20 L154.80 673.60 Z" fill="#000"/>
<text x="156.4" y="632.7" font-size="12.6" fill="#111111" text-anchor="start" textLength="56.5" lengthAdjust="spacingAndGlyphs" stroke="#111" stroke-width="0.3">Start up</text>
<path d="M224.40 786.30 L226.60 786.30 L226.60 820.60 L233.20 820.20 L225.50 825.60 L217.80 820.20 L224.40 820.60 Z" fill="#000"/>
<text x="226.6" y="778.9" font-size="12.6" fill="#111111" text-anchor="start" textLength="75.6" lengthAdjust="spacingAndGlyphs" stroke="#111" stroke-width="0.3">CPU active</text>
<path d="M338.90 811.80 L341.10 811.80 L341.10 846.10 L347.70 845.70 L340.00 851.10 L332.30 845.70 L338.90 846.10 Z" fill="#000"/>
<text x="340.5" y="804.8" font-size="12.6" fill="#111111" text-anchor="start" textLength="94.2" lengthAdjust="spacingAndGlyphs" stroke="#111" stroke-width="0.3">XTAL start up</text>
<path d="M426.90 775.40 L429.10 775.40 L429.10 747.50 L435.70 747.90 L428.00 742.50 L420.30 747.90 L426.90 747.50 Z" fill="#000"/>
<text x="428.6" y="789.1" font-size="12.6" fill="#111111" text-anchor="start" textLength="71.9" lengthAdjust="spacingAndGlyphs" stroke="#111" stroke-width="0.3">Pll turn on</text>
<path d="M499.80 503.70 L502.00 503.70 L502.00 537.80 L508.60 537.40 L500.90 542.80 L493.20 537.40 L499.80 537.80 Z" fill="#000"/>
<text x="500.9" y="496.0" font-size="12.6" fill="#111111" text-anchor="start" textLength="17.5" lengthAdjust="spacingAndGlyphs" stroke="#111" stroke-width="0.3">TX</text>
<path d="M551.60 876.40 L553.80 876.40 L553.80 848.70 L560.40 849.10 L552.70 843.70 L545.00 849.10 L551.60 848.70 Z" fill="#000"/>
<text x="551.8" y="891.8" font-size="12.6" fill="#111111" text-anchor="start" textLength="40.7" lengthAdjust="spacingAndGlyphs" stroke="#111" stroke-width="0.3">RX/TX</text>
<path d="M587.80 794.50 L590.00 794.50 L590.00 767.10 L596.60 767.50 L588.90 762.10 L581.20 767.50 L587.80 767.10 Z" fill="#000"/>
<text x="589.3" y="808.4" font-size="12.6" fill="#111111" text-anchor="start" textLength="114.0" lengthAdjust="spacingAndGlyphs" stroke="#111" stroke-width="0.3">Pll Lock time RX</text>
<path d="M666.50 606.30 L668.70 606.30 L668.70 639.50 L675.30 639.10 L667.60 644.50 L659.90 639.10 L666.50 639.50 Z" fill="#000"/>
<text x="667.6" y="597.6" font-size="12.6" fill="#111111" text-anchor="start" textLength="16.6" lengthAdjust="spacingAndGlyphs" stroke="#111" stroke-width="0.3">RX</text>
<path d="M744.90 876.40 L747.10 876.40 L747.10 848.70 L753.70 849.10 L746.00 843.70 L738.30 849.10 L744.90 848.70 Z" fill="#000"/>
<text x="745.1" y="891.8" font-size="12.6" fill="#111111" text-anchor="start" textLength="40.7" lengthAdjust="spacingAndGlyphs" stroke="#111" stroke-width="0.3">RX/TX</text>
<path d="M802.20 775.40 L804.40 775.40 L804.40 747.50 L811.00 747.90 L803.30 742.50 L795.60 747.90 L802.20 747.50 Z" fill="#000"/>
<text x="803.9" y="789.1" font-size="12.6" fill="#111111" text-anchor="start" textLength="71.9" lengthAdjust="spacingAndGlyphs" stroke="#111" stroke-width="0.3">Pll turn on</text>
<path d="M875.10 503.70 L877.30 503.70 L877.30 537.80 L883.90 537.40 L876.20 542.80 L868.50 537.40 L875.10 537.80 Z" fill="#000"/>
<text x="876.2" y="496.0" font-size="12.6" fill="#111111" text-anchor="start" textLength="17.5" lengthAdjust="spacingAndGlyphs" stroke="#111" stroke-width="0.3">TX</text>
<path d="M926.90 876.40 L929.10 876.40 L929.10 848.70 L935.70 849.10 L928.00 843.70 L920.30 849.10 L926.90 848.70 Z" fill="#000"/>
<text x="927.1" y="891.8" font-size="12.6" fill="#111111" text-anchor="start" textLength="40.7" lengthAdjust="spacingAndGlyphs" stroke="#111" stroke-width="0.3">RX/TX</text>
<path d="M963.10 794.50 L965.30 794.50 L965.30 767.10 L971.90 767.50 L964.20 762.10 L956.50 767.50 L963.10 767.10 Z" fill="#000"/>
<text x="964.6" y="808.4" font-size="12.6" fill="#111111" text-anchor="start" textLength="114.0" lengthAdjust="spacingAndGlyphs" stroke="#111" stroke-width="0.3">Pll Lock time RX</text>
<path d="M1041.80 606.30 L1044.00 606.30 L1044.00 639.50 L1050.60 639.10 L1042.90 644.50 L1035.20 639.10 L1041.80 639.50 Z" fill="#000"/>
<text x="1042.9" y="597.6" font-size="12.6" fill="#111111" text-anchor="start" textLength="16.6" lengthAdjust="spacingAndGlyphs" stroke="#111" stroke-width="0.3">RX</text>
<path d="M1120.20 876.40 L1122.40 876.40 L1122.40 848.70 L1129.00 849.10 L1121.30 843.70 L1113.60 849.10 L1120.20 848.70 Z" fill="#000"/>
<text x="1120.4" y="891.8" font-size="12.6" fill="#111111" text-anchor="start" textLength="40.7" lengthAdjust="spacingAndGlyphs" stroke="#111" stroke-width="0.3">RX/TX</text>
<path d="M1177.50 775.40 L1179.70 775.40 L1179.70 747.50 L1186.30 747.90 L1178.60 742.50 L1170.90 747.90 L1177.50 747.50 Z" fill="#000"/>
<text x="1179.2" y="789.1" font-size="12.6" fill="#111111" text-anchor="start" textLength="71.9" lengthAdjust="spacingAndGlyphs" stroke="#111" stroke-width="0.3">Pll turn on</text>
<path d="M1250.40 503.70 L1252.60 503.70 L1252.60 537.80 L1259.20 537.40 L1251.50 542.80 L1243.80 537.40 L1250.40 537.80 Z" fill="#000"/>
<text x="1251.5" y="496.0" font-size="12.6" fill="#111111" text-anchor="start" textLength="17.5" lengthAdjust="spacingAndGlyphs" stroke="#111" stroke-width="0.3">TX</text>
<path d="M1302.20 876.40 L1304.40 876.40 L1304.40 848.70 L1311.00 849.10 L1303.30 843.70 L1295.60 849.10 L1302.20 848.70 Z" fill="#000"/>
<text x="1302.4" y="891.8" font-size="12.6" fill="#111111" text-anchor="start" textLength="40.7" lengthAdjust="spacingAndGlyphs" stroke="#111" stroke-width="0.3">RX/TX</text>
<path d="M1338.40 794.50 L1340.60 794.50 L1340.60 767.10 L1347.20 767.50 L1339.50 762.10 L1331.80 767.50 L1338.40 767.10 Z" fill="#000"/>
<text x="1339.9" y="808.4" font-size="12.6" fill="#111111" text-anchor="start" textLength="114.0" lengthAdjust="spacingAndGlyphs" stroke="#111" stroke-width="0.3">Pll Lock time RX</text>
<path d="M1417.10 606.30 L1419.30 606.30 L1419.30 639.50 L1425.90 639.10 L1418.20 644.50 L1410.50 639.10 L1417.10 639.50 Z" fill="#000"/>
<text x="1418.2" y="597.6" font-size="12.6" fill="#111111" text-anchor="start" textLength="16.6" lengthAdjust="spacingAndGlyphs" stroke="#111" stroke-width="0.3">RX</text>
<path d="M1511.60 796.40 L1513.80 796.40 L1513.80 830.20 L1520.40 829.80 L1512.70 835.20 L1505.00 829.80 L1511.60 830.20 Z" fill="#000"/>
<text x="1512.9" y="788.6" font-size="12.6" fill="#111111" text-anchor="start" textLength="87.2" lengthAdjust="spacingAndGlyphs" stroke="#111" stroke-width="0.3">CPU running</text>
<path d="M1579.60 822.90 L1581.80 822.90 L1581.80 856.60 L1588.40 856.20 L1580.70 861.60 L1573.00 856.20 L1579.60 856.60 Z" fill="#000"/>
<text x="1580.7" y="815.0" font-size="12.6" fill="#111111" text-anchor="start" textLength="52.0" lengthAdjust="spacingAndGlyphs" stroke="#111" stroke-width="0.3">CPU off</text>
</g>
</svg></body></html>
